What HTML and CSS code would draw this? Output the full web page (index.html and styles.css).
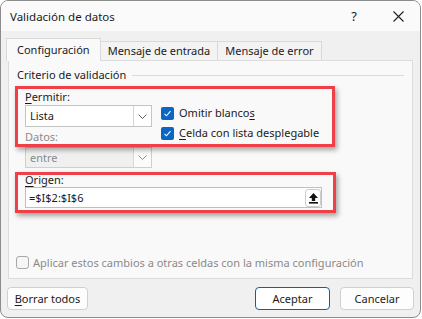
FILE: index.html
```html
<!DOCTYPE html>
<html lang="es">
<head>
    <meta charset="UTF-8">
    <meta name="viewport" content="width=device-width, initial-scale=1.0">
    <title>Validación de datos</title>
    <link rel="stylesheet" href="styles.css">
</head>
<body>
    <div class="window">
        <div class="titlebar">
            <span class="title">Validación de datos</span>
            <span class="help">?</span>
            <span class="close">
                <svg width="11" height="11" viewBox="0 0 11 11"><path d="M.5.5l10 10M10.5.5l-10 10" stroke="#1f1f1f" stroke-width="1.1" fill="none"/></svg>
            </span>
        </div>

        <div class="tabs">
            <div class="tab active">Configuración</div>
            <div class="tab">Mensaje de entrada</div>
            <div class="tab">Mensaje de error</div>
        </div>

        <div class="panel">
            <div class="legend">
                <span>Criterio de validación</span>
                <span class="legend-line"></span>
            </div>

            <div class="fields">
                <label class="label permitir"><u>P</u>ermitir:</label>
                <div class="select lista">
                    <span class="select-value">Lista</span>
                    <span class="select-btn">
                        <svg width="9" height="5" viewBox="0 0 9 5"><path d="M.5.5l4 4 4-4" stroke="#606060" fill="none"/></svg>
                    </span>
                </div>

                <div class="checks">
                    <label class="check-row">
                        <span class="check on">
                            <svg width="13" height="13" viewBox="0 0 13 13"><path d="M3.5 6.8l2 2 4-4.6" stroke="#fff" stroke-width="1.1" fill="none"/></svg>
                        </span>
                        <span>Omitir blanco<u>s</u></span>
                    </label>
                    <label class="check-row">
                        <span class="check on">
                            <svg width="13" height="13" viewBox="0 0 13 13"><path d="M3.5 6.8l2 2 4-4.6" stroke="#fff" stroke-width="1.1" fill="none"/></svg>
                        </span>
                        <span><u>C</u>elda con lista desplegable</span>
                    </label>
                </div>

                <label class="label muted datos">Datos:</label>
                <div class="select disabled">
                    <span class="select-value">entre</span>
                    <span class="select-btn">
                        <svg width="9" height="5" viewBox="0 0 9 5"><path d="M.5.5l4 4 4-4" stroke="#8a8a8a" fill="none"/></svg>
                    </span>
                </div>

                <label class="label origen"><u>O</u>rigen:</label>
                <div class="input">
                    <span class="input-value">=$I$2:$I$6</span>
                    <span class="ref-btn">
                        <svg width="11" height="12" viewBox="0 0 11 12"><path d="M5.5 1L1 6h2.8v3h3.4V6H10z" fill="#111"/><rect x="1" y="10" width="9" height="1.6" fill="#111"/></svg>
                    </span>
                </div>
            </div>

            <label class="apply">
                <span class="check off"></span>
                <span>Aplicar estos cambios a otras celdas con la misma configuración</span>
            </label>

            <div class="mark mark-one"></div>
            <div class="mark mark-two"></div>
        </div>

        <div class="footer">
            <button class="btn"><u>B</u>orrar todos</button>
            <span class="spacer"></span>
            <button class="btn primary">Aceptar</button>
            <button class="btn">Cancelar</button>
        </div>
    </div>
</body>
</html>
```

FILE: styles.css
```css
body { margin: 0; background: #fff; font-family: "Noto Sans", "Open Sans", sans-serif; font-size: 11px; color: #1b1b1b; }
u { text-decoration-thickness: 1px; text-underline-offset: 2px; }

.window { width: 419px; height: 316px; border: 1px solid #8c8c8c; border-radius: 8px; background: #f0f0f0; display: flex; flex-direction: column; overflow: hidden; }

.titlebar { height: 30px; background: #fafafa; display: flex; align-items: center; padding-left: 9px; }
.title { flex: 1; font-size: 11.5px; }
.help { width: 20px; text-align: center; font-size: 13px; margin-right: 24px; }
.close { width: 20px; display: flex; justify-content: center; margin-right: 12px; }

.tabs { display: flex; align-items: flex-end; margin: 7px 0 0 5px; height: 22px; }
.tab { height: 19px; padding: 0 7px; line-height: 18px; border: 1px solid #d9d9d9; border-bottom: none; border-left: none; background: #f3f3f3; box-sizing: border-box; }
.tab.active { height: 23px; margin-bottom: -1px; padding: 0 10px; background: #f9f9f9; border-left: 1px solid #d9d9d9; line-height: 22px; position: relative; z-index: 1; }

.panel { position: relative; margin: 0 7px; height: 219px; box-sizing: border-box; border: 1px solid #dcdcdc; background: #f9f9f9; padding: 6px 7px 8px 8px; display: flex; flex-direction: column; }

.legend { display: flex; align-items: center; gap: 6px; line-height: 16px; }
.legend-line { flex: 1; height: 1px; background: #dadada; margin-right: 1px; margin-top: 1px; }

.fields { margin-left: 8px; display: grid; grid-template-columns: 127px auto; column-gap: 9px; align-items: start; }
.label { display: block; line-height: 16px; grid-column: 1 / 3; }
.permitir { margin-top: 6px; }
.muted { color: #8a8a8a; }
.datos { margin-top: 2px; grid-column: 1; grid-row: 3; }
.origen { margin-top: 4px; line-height: 15px; }

.select { width: 127px; height: 22px; box-sizing: border-box; border: 1px solid #c4c4c4; background: #fff; display: flex; grid-column: 1; }
.select-value { flex: 1; padding-left: 4px; line-height: 20px; }
.select-btn { width: 17px; border-left: 1px solid #d4d4d4; display: flex; align-items: center; justify-content: center; background: #fff; }
.select.disabled { margin-top: 2px; height: 21px; background: #f0f0f0; border-color: #cfcfcf; color: #8a8a8a; }
.select.disabled .select-value { line-height: 19px; }
.select.disabled .select-btn { background: #fbfbfb; border-left-color: #d8d8d8; }

.checks { grid-column: 2; grid-row: 2 / 4; margin-top: 1px; display: flex; flex-direction: column; gap: 6px; }
.check-row { display: flex; align-items: center; gap: 5px; line-height: 14px; }
.check { width: 13px; height: 13px; box-sizing: border-box; border-radius: 2px; display: inline-flex; flex: none; }
.check.on { background: #0a66c2; }
.check.off { border: 1px solid #a8a8a8; background: #f6f6f6; border-radius: 3px; }

.input { grid-column: 1 / 3; width: 297px; height: 21px; box-sizing: border-box; border: 1px solid #bfbfbf; background: #fff; display: flex; align-items: center; }
.input-value { flex: 1; padding-left: 3px; }
.ref-btn { width: 16px; height: 18px; box-sizing: border-box; border: 1px solid #cdcdcd; border-radius: 3px; background: #fff; display: flex; align-items: center; justify-content: center; }

.apply { margin-top: auto; display: flex; align-items: center; gap: 4px; color: #8a8a8a; margin-left: -1px; }

.mark { position: absolute; border: 3px solid #ef3f47; box-shadow: 2px 3px 5px rgba(0, 0, 0, 0.35); box-sizing: border-box; }
.mark-one { left: 6px; top: 25px; width: 320px; height: 61px; }
.mark-two { left: 6px; top: 111px; width: 321px; height: 41px; }

.footer { display: flex; gap: 10px; padding: 8px 6px 0 6px; }
.spacer { flex: 1; }
.btn { height: 23px; padding: 0; font: inherit; color: #1b1b1b; background: #fdfdfd; border: 1px solid #d0d0d0; border-radius: 4px; }
.btn:first-child { width: 81px; }
.btn.primary { width: 75px; border-color: #0a5fb4; background: #fff; }
.btn:last-child { width: 74px; }
```
